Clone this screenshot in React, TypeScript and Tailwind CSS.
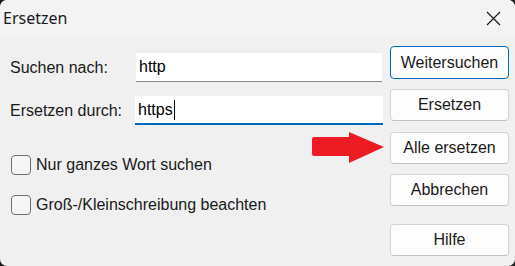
import React from "react";

const arial = { fontFamily: '"Liberation Sans", Arial, sans-serif' };

function Btn({ children, primary }: { children: React.ReactNode; primary?: boolean }) {
  return (
    <button
      className={
        primary
          ? "w-[119px] h-[33px] rounded-[4px] border border-[#0067c0] bg-[#fdfdfd] text-[16px] text-[#1a1a1a] flex items-center justify-center"
          : "w-[119px] h-[32px] rounded-[4px] border border-[#d3d3d3] border-b-[#c2c2c2] bg-[#fdfdfd] text-[16px] text-[#1a1a1a] flex items-center justify-center"
      }
      style={arial}
    >
      {children}
    </button>
  );
}

function Check({ label }: { label: string }) {
  return (
    <div className="flex items-center gap-[5px] h-[20px]">
      <div className="w-[20px] h-[20px] rounded-[4px] border border-[#6f6f6f] bg-[#f6f6f6]" />
      <span className="text-[16px] text-[#1a1a1a] leading-none" style={arial}>
        {label}
      </span>
    </div>
  );
}

export default function App() {
  return (
    <div className="w-[515px] h-[266px] bg-[#1c1c1c] overflow-hidden">
      <div className="relative w-[515px] h-[266px] rounded-[7px] overflow-hidden bg-[#f0f0f0] flex flex-col">
        <div className="h-[35px] bg-[#f3f3f3] flex items-center justify-between pl-[3px] pr-[14px]">
          <span className="text-[16px] text-[#1a1a1a] leading-none" style={{ fontFamily: '"Noto Sans", "Open Sans", sans-serif' }}>
            Ersetzen
          </span>
          <svg width="15" height="15" viewBox="0 0 15 15" className="mt-[2px]">
            <path d="M1 1 L14 14 M14 1 L1 14" stroke="#1a1a1a" strokeWidth="1.2" fill="none" />
          </svg>
        </div>
        <div className="flex flex-1">
          <div className="flex-1 flex flex-col pl-[10px] pt-[18px]">
            <div className="flex items-center h-[29px]">
              <span className="w-[126px] text-[16px] text-[#1a1a1a]" style={arial}>
                Suchen nach:
              </span>
              <div className="w-[246px] h-[29px] bg-white border-b border-[#868686] flex items-center pl-[3px] text-[16px] text-black" style={arial}>
                http
              </div>
            </div>
            <div className="flex items-center h-[29px] mt-[14px]">
              <span className="w-[125px] text-[16px] text-[#1a1a1a]" style={arial}>
                Ersetzen durch:
              </span>
              <div className="w-[248px] h-[29px] bg-white border-b-2 border-[#0067c0] flex items-center pl-[3px] text-[16px] text-black" style={arial}>
                https
                <span className="w-px h-[20px] bg-black ml-[1px]" />
              </div>
            </div>
            <div className="flex flex-col gap-[20px] mt-[30px] pl-[1px]">
              <Check label="Nur ganzes Wort suchen" />
              <Check label="Groß-/Kleinschreibung beachten" />
            </div>
          </div>
          <div className="flex flex-col pt-[11px] pr-[6px]">
            <Btn primary>Weitersuchen</Btn>
            <div className="mt-[10px]">
              <Btn>Ersetzen</Btn>
            </div>
            <div className="mt-[11px]">
              <Btn>Alle ersetzen</Btn>
            </div>
            <div className="mt-[10px]">
              <Btn>Abbrechen</Btn>
            </div>
            <div className="mt-[18px]">
              <Btn primary={false}>Hilfe</Btn>
            </div>
          </div>
        </div>
        <svg className="absolute left-[310px] top-[130px]" width="78" height="36" viewBox="0 0 78 36">
          <path d="M4 7 L39 7 L39 2 L74 17 L39 33 L39 26 L4 26 Q2 26 2 24 L2 9 Q2 7 4 7 Z" fill="#ed1c24" />
        </svg>
      </div>
    </div>
  );
}
